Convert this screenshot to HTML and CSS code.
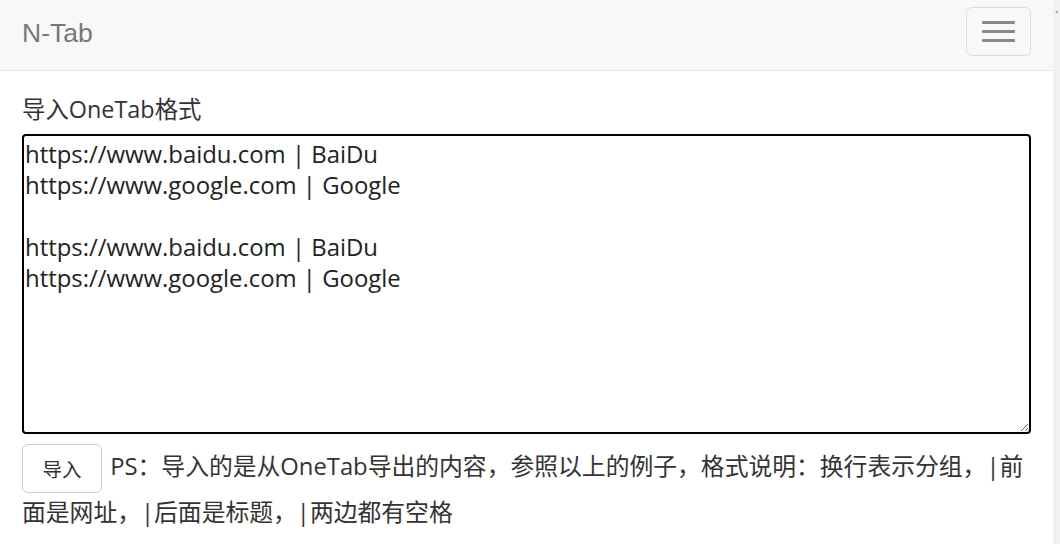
FILE: index.html
```html
<!DOCTYPE html>
<html lang="zh-CN">
<head>
<meta charset="utf-8">
<title>N-Tab</title>
<link rel="stylesheet" href="styles.css">
</head>
<body>
<div class="frame">
  <div class="page">
    <nav class="navbar">
      <span class="brand">N-Tab</span>
      <button class="toggle" type="button" aria-label="menu">
        <span class="bar"></span>
        <span class="bar"></span>
        <span class="bar"></span>
      </button>
    </nav>
    <main class="content">
      <label class="label" for="data">导入OneTab格式</label>
      <textarea id="data" class="data">https://www.baidu.com | BaiDu
https://www.google.com | Google

https://www.baidu.com | BaiDu
https://www.google.com | Google
</textarea>
      <p class="note"><button class="btn" type="button">导入</button> PS：导入的是从OneTab导出的内容，参照以上的例子，格式说明：换行表示分组，|前面是网址，|后面是标题，|两边都有空格</p>
    </main>
  </div>
  <div class="scrollbar"><span class="arrow"></span></div>
</div>
</body>
</html>
```
FILE: styles.css
```css
* { box-sizing: border-box; }
html, body { margin: 0; padding: 0; background: #fff; }
body {
  font-family: "Open Sans", "Noto Sans CJK SC", sans-serif;
  color: #333;
  overflow: hidden;
}
.frame {
  display: flex;
  width: 1060px;
  height: 544px;
}
.page {
  flex: 1;
  min-width: 0;
}
.scrollbar {
  width: 7px;
  background: #f1f1f1;
  position: relative;
}
.arrow {
  position: absolute;
  top: 10px;
  left: 2px;
  width: 0;
  height: 0;
  border-left: 3px solid transparent;
  border-bottom: 3px solid #a3a3a3;
}
.navbar {
  height: 71px;
  background: #f8f8f8;
  border-bottom: 1px solid #e7e7e7;
  display: flex;
  align-items: flex-start;
  justify-content: space-between;
  padding: 0 22px;
}
.brand {
  font-family: "Liberation Sans", Arial, sans-serif;
  font-size: 26.5px;
  color: #777;
  line-height: 26px;
  margin-top: 20px;
}
.toggle {
  margin-top: 7px;
  width: 65px;
  height: 49px;
  border: 1px solid #ddd;
  border-radius: 6px;
  background: transparent;
  display: flex;
  flex-direction: column;
  align-items: center;
  justify-content: center;
  gap: 6px;
  padding: 0;
}
.bar {
  display: block;
  width: 33px;
  height: 3px;
  border-radius: 1px;
  background: #888;
}
.content {
  padding: 22px 22px 0;
}
.label {
  display: block;
  font-size: 23.4px;
  line-height: 32px;
  margin-bottom: 9px;
}
.data {
  display: block;
  width: 100%;
  height: 300px;
  margin: 0;
  border: 2px solid #000;
  border-radius: 4px;
  padding: 2px 1px;
  font-family: "Open Sans", "Noto Sans CJK SC", sans-serif;
  font-size: 23.9px;
  line-height: 31px;
  color: #222;
  outline: none;
  resize: both;
}
.note {
  margin: 10px 0 0;
  font-size: 23.8px;
  line-height: 38px;
}
.btn {
  display: inline-block;
  vertical-align: middle;
  width: 80px;
  height: 49px;
  border: 1px solid #ccc;
  border-radius: 6px;
  background: #fff;
  font-family: "Noto Sans CJK SC", sans-serif;
  font-size: 19.5px;
  color: #333;
  padding: 0;
  margin: 0 2px 0 0;
}
```
